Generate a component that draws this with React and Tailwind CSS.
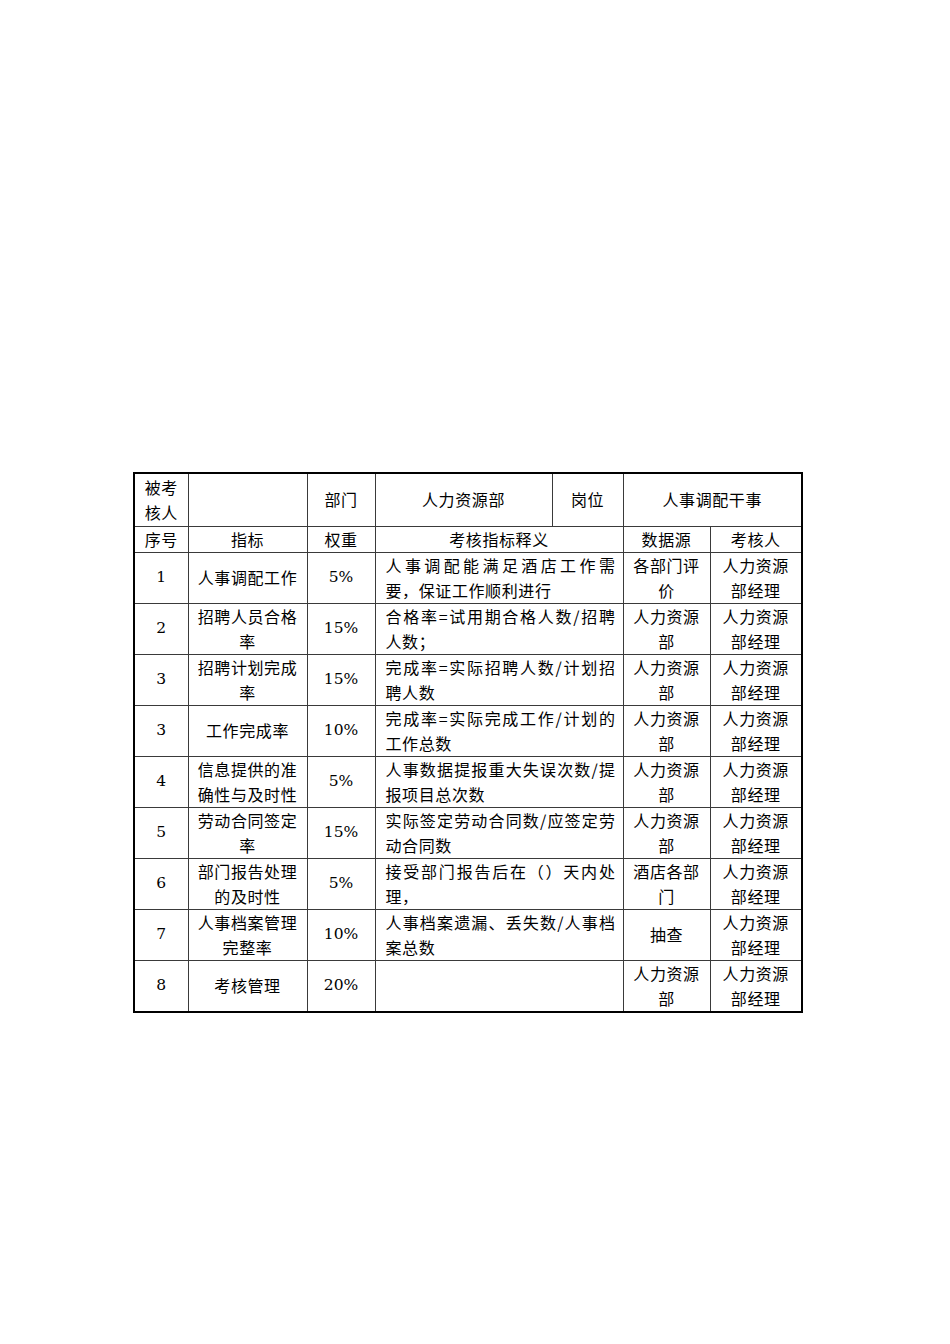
const cjk = "font-['Noto_Sans_CJK_SC','Noto_Sans',sans-serif]";
const num = "font-['DejaVu_Serif','Liberation_Serif',serif] text-[15.5px] tracking-normal";

const rows = [
  { no: '1', name: ['人事调配工作'], weight: '5%', desc: ['人事调配能满足酒店工作需', '要，保证工作顺利进行'], src: ['各部门评', '价'], who: ['人力资源', '部经理'] },
  { no: '2', name: ['招聘人员合格', '率'], weight: '15%', desc: ['合格率=试用期合格人数/招聘', '人数；'], src: ['人力资源', '部'], who: ['人力资源', '部经理'] },
  { no: '3', name: ['招聘计划完成', '率'], weight: '15%', desc: ['完成率=实际招聘人数/计划招', '聘人数'], src: ['人力资源', '部'], who: ['人力资源', '部经理'] },
  { no: '3', name: ['工作完成率'], weight: '10%', desc: ['完成率=实际完成工作/计划的', '工作总数'], src: ['人力资源', '部'], who: ['人力资源', '部经理'] },
  { no: '4', name: ['信息提供的准', '确性与及时性'], weight: '5%', desc: ['人事数据提报重大失误次数/提', '报项目总次数'], src: ['人力资源', '部'], who: ['人力资源', '部经理'] },
  { no: '5', name: ['劳动合同签定', '率'], weight: '15%', desc: ['实际签定劳动合同数/应签定劳', '动合同数'], src: ['人力资源', '部'], who: ['人力资源', '部经理'] },
  { no: '6', name: ['部门报告处理', '的及时性'], weight: '5%', desc: ['接受部门报告后在（）天内处', '理，'], src: ['酒店各部', '门'], who: ['人力资源', '部经理'] },
  { no: '7', name: ['人事档案管理', '完整率'], weight: '10%', desc: ['人事档案遗漏、丢失数/人事档', '案总数'], src: ['抽查'], who: ['人力资源', '部经理'] },
  { no: '8', name: ['考核管理'], weight: '20%', desc: [], src: ['人力资源', '部'], who: ['人力资源', '部经理'] },
];

const td = 'border border-[#3a3a3a] p-0 align-middle';

function Lines({ items }) {
  return items.map((t, i) => <div key={i}>{t}</div>);
}

export default function App() {
  return (
    <div className={`min-h-[1344px] bg-white pt-[472px] pl-[133px] text-black ${cjk} text-[16px] leading-[25px] tracking-[0.6px]`}>
      <div className="w-[670px] border-2 border-black">
        <table className="w-[666px] table-fixed border-collapse border-hidden text-center">
          <colgroup>
            <col className="w-[53px]" />
            <col className="w-[119px]" />
            <col className="w-[68px]" />
            <col className="w-[177px]" />
            <col className="w-[71px]" />
            <col className="w-[87px]" />
            <col className="w-[91px]" />
          </colgroup>
          <tbody>
            <tr className="h-[52px]">
              <td className={td}>
                <div>被考</div>
                <div>核人</div>
              </td>
              <td className={td}></td>
              <td className={td}>部门</td>
              <td className={td}>人力资源部</td>
              <td className={td}>岗位</td>
              <td className={td} colSpan={2}>人事调配干事</td>
            </tr>
            <tr className="h-[25px]">
              <td className={td}>序号</td>
              <td className={td}>指标</td>
              <td className={td}>权重</td>
              <td className={td} colSpan={2}>考核指标释义</td>
              <td className={td}>数据源</td>
              <td className={td}>考核人</td>
            </tr>
            {rows.map((r, i) => (
              <tr key={i} className="h-[51px]">
                <td className={`${td} ${num}`}>{r.no}</td>
                <td className={td}>
                  <Lines items={r.name} />
                </td>
                <td className={`${td} ${num}`}>{r.weight}</td>
                <td className={`${td} pl-[10px] pr-[7px] text-left`} colSpan={2}>
                  {r.desc.length > 0 && (
                    <>
                      <div className="text-justify [text-align-last:justify]">{r.desc[0]}</div>
                      <div>{r.desc[1]}</div>
                    </>
                  )}
                </td>
                <td className={td}>
                  <Lines items={r.src} />
                </td>
                <td className={td}>
                  <Lines items={r.who} />
                </td>
              </tr>
            ))}
          </tbody>
        </table>
      </div>
    </div>
  );
}
